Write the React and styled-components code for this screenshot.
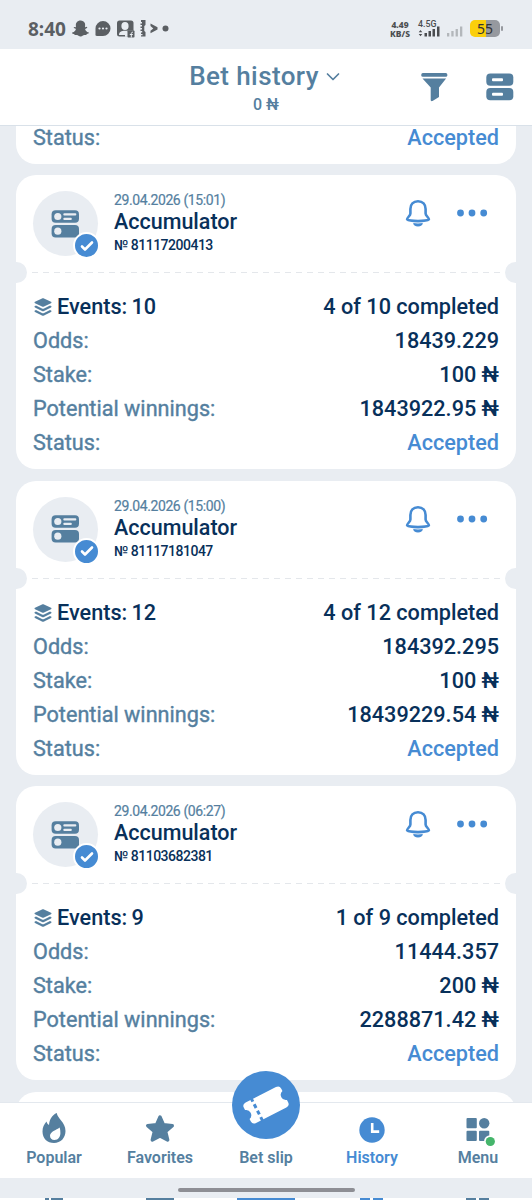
import React from "react";
import styled, { createGlobalStyle } from "styled-components";
import { FaSnapchatGhost } from "react-icons/fa";

const slate = "#557f9f";
const navy = "#08305a";
const blue = "#468bd3";
const mist = "#e9edf2";

const bets = [
  {
    date: "29.04.2026 (15:01)",
    number: "81117200413",
    events: 10,
    completed: "4 of 10 completed",
    odds: "18439.229",
    stake: "100 ₦",
    winnings: "1843922.95 ₦",
  },
  {
    date: "29.04.2026 (15:00)",
    number: "81117181047",
    events: 12,
    completed: "4 of 12 completed",
    odds: "184392.295",
    stake: "100 ₦",
    winnings: "18439229.54 ₦",
  },
  {
    date: "29.04.2026 (06:27)",
    number: "81103682381",
    events: 9,
    completed: "1 of 9 completed",
    odds: "11444.357",
    stake: "200 ₦",
    winnings: "2288871.42 ₦",
  },
];

const App = () => (
  <Screen>
    <GlobalStyle />
    <StatusBar>
      <Clock>8:40</Clock>
      <FaSnapchatGhost size={17} color="#5b5f63" />
      <NotificationIcons />
      <Speed>
        <span>4.49</span>
        <span>KB/S</span>
      </Speed>
      <SignalIcons />
      <Battery>55</Battery>
      <BatteryTip />
    </StatusBar>
    <Header>
      <Heading>
        <Title>
          Bet history
          <ChevronIcon />
        </Title>
        <Balance>0 ₦</Balance>
      </Heading>
      <HeaderActions>
        <FilterIcon />
        <ViewIcon />
      </HeaderActions>
    </Header>
    <List>
      <ClippedCard>
        <Row>
          <Label>Status:</Label>
          <Value $accent>Accepted</Value>
        </Row>
      </ClippedCard>
      {bets.map((bet) => <BetCard key={bet.number} bet={bet} />)}
      <Card />
    </List>
    <NavBar>
      <NavItem><FlameIcon /><NavLabel>Popular</NavLabel></NavItem>
      <NavItem><StarIcon /><NavLabel>Favorites</NavLabel></NavItem>
      <NavItem>
        <SlipButton><TicketIcon /></SlipButton>
        <NavLabel>Bet slip</NavLabel>
      </NavItem>
      <NavItem $active><ClockIcon /><NavLabel>History</NavLabel></NavItem>
      <NavItem><MenuIcon /><NavLabel>Menu</NavLabel></NavItem>
    </NavBar>
    <GestureArea>
      <GestureBar />
    </GestureArea>
    <NextStrip>
      <Sliver $w={4} $gap={45} />
      <Sliver $w={12} $gap={2} />
      <Sliver $w={28} $gap={83} />
      <Sliver $w={58} $gap={63} $accent />
      <Sliver $w={10} $gap={65} $accent />
      <Sliver $w={10} $gap={3} $accent />
      <Sliver $w={10} $gap={83} />
      <Sliver $w={10} $gap={3} />
    </NextStrip>
  </Screen>
);

const BetCard = ({ bet }) => (
  <Card>
    <CardHead>
      <Avatar>
        <CouponIcon />
        <CheckBadge><CheckIcon /></CheckBadge>
      </Avatar>
      <Info>
        <DateText>{bet.date}</DateText>
        <TypeText>Accumulator</TypeText>
        <NumberText>№ {bet.number}</NumberText>
      </Info>
      <CardActions>
        <BellIcon />
        <DotsIcon />
      </CardActions>
    </CardHead>
    <Divider />
    <CardBody>
      <Row>
        <Events><LayersIcon />Events: {bet.events}</Events>
        <Value>{bet.completed}</Value>
      </Row>
      <Row><Label>Odds:</Label><Value>{bet.odds}</Value></Row>
      <Row><Label>Stake:</Label><Value>{bet.stake}</Value></Row>
      <Row><Label>Potential winnings:</Label><Value>{bet.winnings}</Value></Row>
      <Row><Label>Status:</Label><Value $accent>Accepted</Value></Row>
    </CardBody>
  </Card>
);

const NotificationIcons = () => (
  <svg width="81" height="20" viewBox="17 0 81 20" fill="#5b5f63">
    <path d="M31 2a7.500 7.500 0 0 1 0 15h-6c-1.400 0-1.700-.7-1.500-2V9.500A7.500 7.500 0 0 1 31 2z" />
    <g fill={mist}><circle cx="27.500" cy="9.500" r="1.100" /><circle cx="31" cy="9.500" r="1.100" /><circle cx="34.500" cy="9.500" r="1.100" /></g>
    <rect x="45" y="1.500" width="16.500" height="16" rx="2.500" />
    <g fill={mist}>
      <ellipse cx="53" cy="7" rx="3.600" ry="4" />
      <path d="M47 16c0-3 2.500-4.200 6-4.200h8.500v6H53V16z" />
    </g>
    <rect x="55.500" y="11.500" width="7" height="7" rx=".8" />
    <path d="M59.300 18.500v-3.800c0-1 .5-1.500 1.700-1.500M57.800 15.500h3" fill="none" stroke={mist} strokeWidth="1" />
    <path d="M69 1h4.500v5l-1.200 1v5l1.200 1v4.500H69v-1.200h1.500V15H69v-1.500h1.200V12h-1.700v-1.500h1.500V9h-1.500V7.500H70V6h-1.500V4.500H70V3h-1z" />
    <path d="m78.500 4.500 7 3.800v2.200l-7 3.800v-2.600l2.800-2.300-2.800-2.300z" />
    <circle cx="93.500" cy="9.500" r="3" />
  </svg>
);

const SignalIcons = () => (
  <svg width="46" height="20" viewBox="0 0 46 20">
    <text x="0" y="8" fontFamily="Roboto, sans-serif" fontSize="8.800" fontWeight="500" fill="#4b4d50" textLength="18.500">4.5G</text>
    <g fill="#4b4d50">
      <path d="m2.500 11 1.800 2.300H.7zM.7 15h3.600l-1.800 2.300z" />
      <rect x="6.500" y="14" width="2.500" height="3.500" />
      <rect x="10.500" y="12" width="2.500" height="5.500" />
      <rect x="14.500" y="10" width="2.500" height="7.500" />
      <rect x="19" y="7.500" width="2.500" height="10" />
    </g>
    <g fill="#b3b7bb">
      <rect x="29" y="14" width="2.300" height="3.500" />
      <rect x="33.300" y="12" width="2.300" height="5.500" />
      <rect x="37.600" y="10" width="2.300" height="7.500" />
      <rect x="42" y="7.500" width="2.300" height="10" />
    </g>
  </svg>
);

const ChevronIcon = () => (
  <svg width="14" height="10" viewBox="0 0 14 10" fill="none" stroke={slate} strokeWidth="1.700" strokeLinecap="round" strokeLinejoin="round">
    <path d="m1.500 2 5.500 5.500L12.500 2" />
  </svg>
);

const FilterIcon = () => (
  <svg width="27" height="28" viewBox="0 0 27 28" fill={slate}>
    <rect x=".3" y="0" width="26" height="3.800" rx="1.500" />
    <path d="M1.500 5.500h23.600L18 14.500V24l-6.500 4c-1 .4-1.800 0-1.800-1V14.500z" />
  </svg>
);

const ViewIcon = () => (
  <svg width="28" height="28" viewBox="0 0 28 28" fill={slate}>
    <rect x=".3" y=".5" width="27" height="12.300" rx="4" />
    <rect x=".3" y="15" width="27" height="12.300" rx="4" />
    <rect x="6" y="5.200" width="11" height="3" rx="1" fill="#fff" />
    <rect x="6" y="19.700" width="11" height="3" rx="1" fill="#fff" />
  </svg>
);

const CouponIcon = () => (
  <svg width="28" height="28" viewBox="0.700 0 28 28" fill={slate}>
    <rect x=".3" y=".3" width="27.400" height="12.500" rx="4" />
    <rect x=".3" y="15" width="27.400" height="12.500" rx="4" />
    <g fill={mist}>
      <circle cx="6.500" cy="6.500" r="3.600" />
      <circle cx="6.500" cy="21.200" r="3.600" />
      <rect x="12" y="3.200" width="13" height="2.300" rx="1" />
      <rect x="12" y="7.700" width="8.500" height="2.300" rx="1" />
    </g>
  </svg>
);

const CheckIcon = () => (
  <svg width="14" height="12" viewBox="0 0 14 12" fill="none" stroke="#fff" strokeWidth="2.600" strokeLinecap="round" strokeLinejoin="round">
    <path d="m2 6.500 3 3 7-7" />
  </svg>
);

const BellIcon = () => (
  <svg width="26" height="28" viewBox="0 0 26 28" fill="none" stroke={blue} strokeWidth="2.600" strokeLinejoin="round">
    <path d="M13 2.200c-4.800 0-7.600 3.200-7.600 7.800v4.500c0 2.300-3.300 4-3.300 5.800 2.500 2.400 19.300 2.400 21.800 0 0-1.800-3.300-3.500-3.300-5.800V10c0-4.600-2.800-7.800-7.600-7.800z" />
    <path d="M8.200 24.100c3 .6 6.600.6 9.600 0 0 2-2 3.400-4.800 3.400s-4.800-1.400-4.800-3.400z" fill={blue} stroke="none" />
  </svg>
);

const DotsIcon = () => (
  <svg width="32" height="8" viewBox="0 0 32 8" fill={blue}>
    <circle cx="4.500" cy="4" r="3.400" /><circle cx="16" cy="4" r="3.400" /><circle cx="27.700" cy="4" r="3.400" />
  </svg>
);

const LayersIcon = () => (
  <svg width="18" height="18" viewBox="0 0 18 18" fill={slate}>
    <path d="M8 .4c.7-.3 1.300-.3 2 0l7 3.400c.7.400.7 1 0 1.400l-7 3.400c-.7.300-1.300.3-2 0L1 5.200c-.7-.4-.7-1 0-1.400z" />
    <path d="m2 7.500 6 3c.7.300 1.300.3 2 0l6-3 1 .6c.7.400.7 1 0 1.400l-7 3.500c-.7.300-1.300.3-2 0L1 9.500c-.7-.4-.7-1 0-1.400z" />
    <path d="m2 12 6 3c.7.300 1.300.3 2 0l6-3 1 .6c.7.400.7 1 0 1.400l-7 3.500c-.7.300-1.300.3-2 0L1 14c-.7-.4-.7-1 0-1.400z" />
  </svg>
);

const FlameIcon = () => (
  <svg width="24" height="30" viewBox="0 0 24 30" fill={slate}>
    <path fillRule="evenodd" d="M14.800 0c.4 5.500 8.700 9 8.700 18 0 7-4.800 12-11.500 12S.5 25.500.5 18.500c0-4.500 1.500-7 4-10 .4 1.600 1 2.600 2.500 3.500C7.500 6.500 10 2 14.800 0zM17.700 14.500c-3.500 2.500-9.700 4.300-9.700 8.300 0 2.700 1.700 4.200 4.400 4.200 4 0 6-3.400 6-7 0-2-.2-3.700-.7-5.500z" />
  </svg>
);

const StarIcon = () => (
  <svg width="30" height="30" viewBox="0 0 30 30" fill={slate} stroke={slate} strokeWidth="3.400" strokeLinejoin="round">
    <path d="m15 4 3.400 7.600 8.900 1.100-6.700 5.800 2.100 8.500-7.700-4-7.700 4 2.100-8.500-6.700-5.800 8.900-1.100z" />
  </svg>
);

const TicketIcon = () => (
  <svg width="46" height="42" viewBox="0 0 46 42">
    <g transform="rotate(-27 23 21)">
      <path fill="#fff" d="M6 9.500h34a4 4 0 0 1 4 4v2.500a5.200 5.200 0 0 0 0 10v2.500a4 4 0 0 1-4 4H6a4 4 0 0 1-4-4V26a5.200 5.200 0 0 0 0-10v-2.500a4 4 0 0 1 4-4z" />
      <path d="M12.800 7.800v26" stroke={blue} strokeWidth="3" strokeDasharray="4.200 3" />
    </g>
  </svg>
);

const ClockIcon = () => (
  <svg width="26" height="26" viewBox="0 0 26 26">
    <circle cx="13" cy="13" r="12.700" fill={blue} />
    <path d="M13.200 6v8.600h7" fill="none" stroke="#fff" strokeWidth="2.600" />
  </svg>
);

const MenuIcon = () => (
  <svg width="30" height="30" viewBox="0 -2 30 30" fill={slate}>
    <rect x="3.500" y="3" width="10.300" height="10.300" rx="1" />
    <circle cx="21.200" cy="8.200" r="5.200" />
    <rect x="3.500" y="15.700" width="10.300" height="10.300" rx="1" />
    <rect x="16" y="15.700" width="10.300" height="10.300" rx="1" />
    <circle cx="27.300" cy="26.500" r="6.300" fill="#fff" />
    <circle cx="27.300" cy="26.500" r="4.600" fill="#45b56b" />
  </svg>
);

const GlobalStyle = createGlobalStyle`
  * {
    box-sizing: border-box;
  }

  body {
    margin: 0;
    font-family: Roboto, sans-serif;
  }

  svg {
    display: block;
    flex: none;
    overflow: visible;
  }
`;

const Screen = styled.div`
  display: flex;
  flex-direction: column;
  width: 532px;
  height: 1200px;
  overflow: hidden;
  background: ${mist};
`;

const StatusBar = styled.div`
  display: flex;
  align-items: center;
  flex: none;
  height: 49px;
  padding: 8px 29px 0 28px;
`;

const Clock = styled.div`
  width: 44px;
  font: 700 19px/20px "Noto Sans", sans-serif;
  color: #5b5f63;
`;

const Speed = styled.div`
  display: flex;
  flex-direction: column;
  align-items: center;
  width: 22px;
  margin-left: auto;
  margin-right: 7px;
  font: 800 8.500px/9px "Noto Sans", sans-serif;
  color: #4b4d50;
`;

const Battery = styled.div`
  width: 30px;
  height: 17px;
  margin-left: 6px;
  border-radius: 5px;
  background: linear-gradient(90deg, #fbcf0b 55%, #96999f 55%);
  font: 400 14px/17px "Noto Sans", sans-serif;
  text-align: center;
  color: #333;
`;

const BatteryTip = styled.div`
  width: 2px;
  height: 5px;
  margin-left: 1px;
  border-radius: 1px;
  background: #96999f;
`;

const Header = styled.header`
  display: grid;
  grid-template-columns: 1fr auto 1fr;
  flex: none;
  height: 77px;
  padding: 0 18px;
  border-bottom: 1px solid #d9e1e9;
  background: #fff;
`;

const Heading = styled.div`
  grid-column: 2;
  padding-top: 12px;
  text-align: center;
  color: ${slate};
`;

const Title = styled.h1`
  display: flex;
  align-items: center;
  gap: 7px;
  margin: 0;
  padding-right: 3px;
  font-size: 26px;
  font-weight: 500;
  line-height: 31px;
  letter-spacing: 0.4px;
`;

const Balance = styled.div`
  font-size: 16px;
  font-weight: 500;
  line-height: 26px;
`;

const HeaderActions = styled.div`
  display: flex;
  align-items: flex-start;
  justify-content: flex-end;
  gap: 38px;
  padding-top: 24px;
`;

const List = styled.main`
  display: flex;
  flex-direction: column;
  gap: 11.500px;
  flex: none;
  height: 976px;
  padding: 0 16px;
  overflow: hidden;
`;

const Card = styled.section`
  position: relative;
  flex: none;
  height: 294px;
  border-radius: 20px;
  background: #fff;
`;

const CardHead = styled.div`
  display: flex;
  height: 97px;
  padding: 16px 28px 0 17px;
`;

const Avatar = styled.div`
  position: relative;
  display: grid;
  place-items: center;
  width: 65px;
  height: 65px;
  border-radius: 50%;
  background: ${mist};
`;

const CheckBadge = styled.div`
  position: absolute;
  right: -2px;
  bottom: -3px;
  display: grid;
  place-items: center;
  width: 27px;
  height: 27px;
  border: 2.500px solid #fff;
  border-radius: 50%;
  background: ${blue};
`;

const Info = styled.div`
  padding-left: 16px;
  white-space: nowrap;
  color: ${navy};
`;

const DateText = styled.div`
  font-size: 14px;
  line-height: 18px;
  letter-spacing: -0.4px;
  color: ${slate};
  -webkit-text-stroke: 0.2px ${slate};
`;

const TypeText = styled.div`
  font-size: 21.500px;
  font-weight: 500;
  line-height: 25px;
`;

const NumberText = styled.div`
  font-size: 14px;
  font-weight: 500;
  line-height: 22px;
  letter-spacing: -0.5px;
`;

const CardActions = styled.div`
  display: flex;
  gap: 25px;
  margin-left: auto;
  padding-top: 8px;

  svg:last-child {
    margin-top: 10px;
  }
`;

/* ticket perforation: dashed line with a notch bitten out of each edge */
const Divider = styled.div`
  height: 1px;
  margin: 0 16px;
  background: repeating-linear-gradient(90deg, #e4e7eb 0 6px, transparent 6px 11px);

  &::before,
  &::after {
    content: "";
    position: absolute;
    top: 87px;
    width: 11px;
    height: 21px;
    background: ${mist};
  }

  &::before {
    left: 0;
    border-radius: 0 11px 11px 0;
  }

  &::after {
    right: 0;
    border-radius: 11px 0 0 11px;
  }
`;

const CardBody = styled.div`
  padding: 17.400px 17px 0;
`;

const Row = styled.div`
  display: flex;
  align-items: center;
  justify-content: space-between;
  height: 34px;
  font-size: 21.650px;
  line-height: 34px;
  white-space: nowrap;
`;

const ClippedCard = styled(Card)`
  height: 37.500px;
  padding: 0 17px;
  border-radius: 0 0 20px 20px;

  ${Row} {
    height: 24px;
    line-height: 24px;
  }
`;

const Label = styled.span`
  color: ${slate};
  -webkit-text-stroke: 0.4px ${slate};
`;

const Value = styled.span`
  font-weight: 500;
  color: ${({ $accent }) => ($accent ? blue : navy)};
`;

const Events = styled.span`
  display: flex;
  align-items: center;
  gap: 5px;
  padding-left: 1px;
  font-weight: 500;
  word-spacing: -1.200px;
  color: ${navy};
`;

const NavBar = styled.nav`
  position: relative;
  display: grid;
  grid-template-columns: repeat(5, 106px);
  justify-content: center;
  flex: none;
  height: 76px;
  border-top: 1px solid #e3e8ee;
  background: #fff;
`;

const NavItem = styled.div`
  display: flex;
  flex-direction: column;
  align-items: center;
  justify-content: flex-end;
  gap: 4px;
  padding-bottom: 9px;
  color: ${({ $active }) => ($active ? blue : slate)};
`;

const NavLabel = styled.span`
  font-size: 16px;
  font-weight: 600;
  line-height: 22px;
`;

const SlipButton = styled.div`
  position: absolute;
  top: -32px;
  display: grid;
  place-items: center;
  width: 68px;
  height: 68px;
  border-radius: 50%;
  background: ${blue};
`;

const GestureArea = styled.div`
  display: flex;
  justify-content: center;
  flex: none;
  height: 20px;
  padding-top: 10px;
`;

const GestureBar = styled.div`
  width: 177px;
  height: 4px;
  border-radius: 2px;
  background: #8d8e94;
`;

const NextStrip = styled.div`
  display: flex;
  flex: none;
  height: 2px;
  background: #fff;
`;

const Sliver = styled.i`
  width: ${({ $w }) => $w}px;
  height: 2px;
  margin-left: ${({ $gap }) => $gap}px;
  background: ${({ $accent }) => ($accent ? blue : slate)};
`;

export default App;
